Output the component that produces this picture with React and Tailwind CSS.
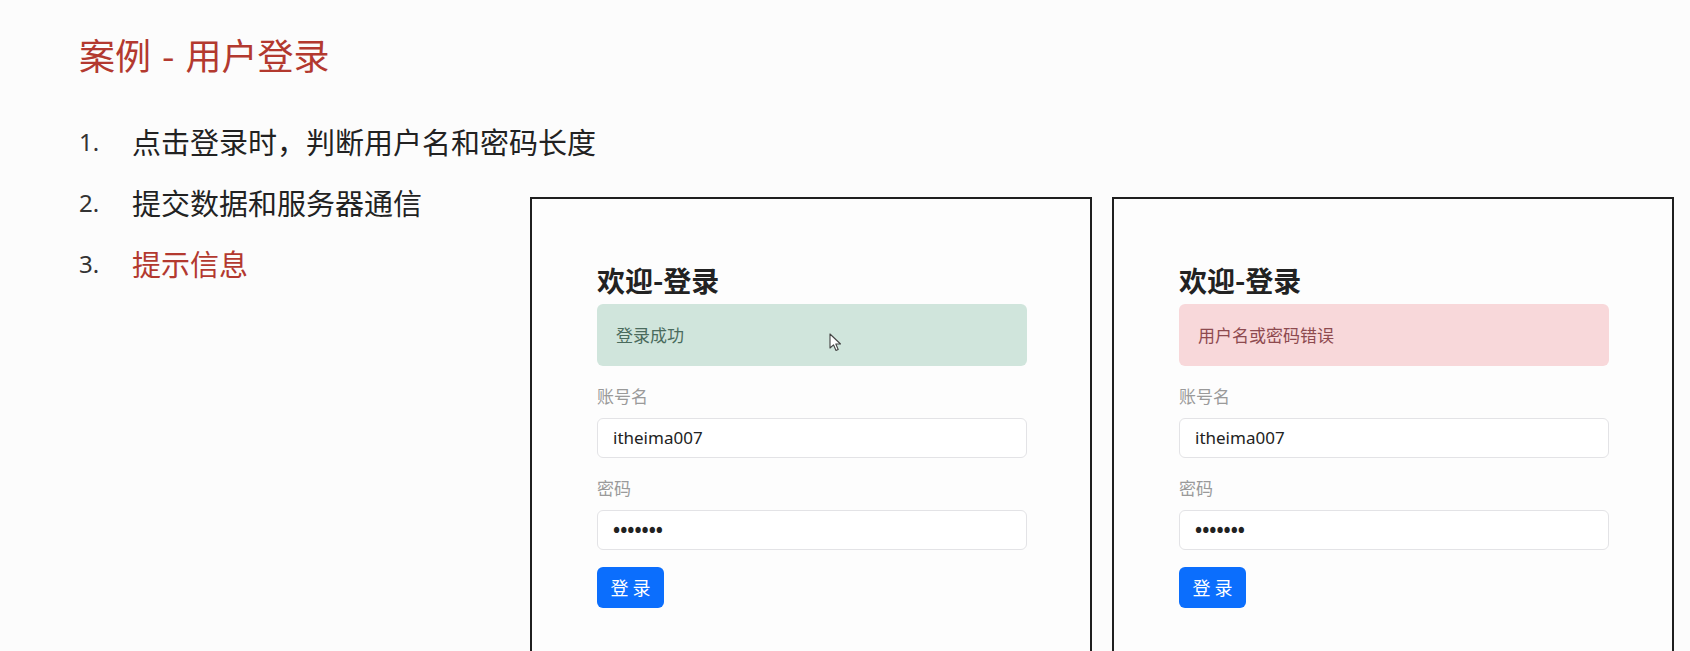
import React from "react";

const cjk = { fontFamily: '"Noto Sans CJK SC", "Noto Sans", sans-serif' };
const latin = { fontFamily: '"Noto Sans", "Noto Sans CJK SC", sans-serif' };

function Cursor() {
  return (
    <svg
      className="absolute left-[232px] top-[29px]"
      width="13"
      height="19"
      viewBox="0 0 13 19"
    >
      <path
        d="M1 1 L1 15 L4.5 11.8 L7 17.5 L9.2 16.5 L6.8 11 L11.5 11 Z"
        fill="#fff"
        stroke="#444"
        strokeWidth="1.1"
        strokeLinejoin="round"
      />
    </svg>
  );
}

function LoginCard({ variant }) {
  const ok = variant === "success";
  return (
    <div className="w-[562px] h-[480px] shrink-0 border-2 border-[#1f1f1f] bg-[#fdfdfd] pl-[65px] pt-[64px]">
      <div className="w-[430px]" style={cjk}>
        <h2 className="text-[28px] leading-[34px] font-bold text-[#222] mb-[7px]">
          欢迎-登录
        </h2>
        <div
          className={
            ok
              ? "relative h-[62px] rounded-[6px] bg-[#d0e5dc] text-[#4a6b5d] flex items-center px-[19px] text-[17px]"
              : "relative h-[62px] rounded-[6px] bg-[#f8d8da] text-[#8e4a4f] flex items-center px-[19px] text-[17px]"
          }
        >
          {ok ? "登录成功" : "用户名或密码错误"}
          {ok && <Cursor />}
        </div>
        <div className="mt-[18px] text-[17px] leading-[24px] text-[#9a9a9a]">账号名</div>
        <div
          className="mt-[10px] h-[40px] rounded-[6px] border border-[#e3e3e6] bg-white flex items-center px-[15px] text-[17px] text-[#222]"
          style={latin}
        >
          itheima007
        </div>
        <div className="mt-[18px] text-[17px] leading-[24px] text-[#9a9a9a]">密码</div>
        <div
          className="mt-[10px] h-[40px] rounded-[6px] border border-[#e3e3e6] bg-white flex items-center px-[15px] text-[19px] font-bold text-[#222]"
          style={latin}
        >
          •••••••
        </div>
        <button
          type="button"
          className="mt-[17px] w-[67px] h-[41px] rounded-[6px] bg-[#0b6efd] text-white text-[18px] flex items-center justify-center"
        >
          登 录
        </button>
      </div>
    </div>
  );
}

export default function App() {
  const items = [
    { n: "1.", t: "点击登录时，判断用户名和密码长度", red: false },
    { n: "2.", t: "提交数据和服务器通信", red: false },
    { n: "3.", t: "提示信息", red: true },
  ];

  return (
    <div className="w-[1690px] h-[651px] overflow-hidden bg-[#fcfcfc] pl-[79px] pt-[32px]" style={cjk}>
      <h1 className="text-[36px] leading-[44px] text-[#b3392f] flex items-center">
        <span>案例</span>
        <span className="mx-[11px]">-</span>
        <span>用户登录</span>
      </h1>

      <div className="flex mt-[35px]">
        {/* list */}
        <ol className="w-[451px] shrink-0">
          {items.map((it) => (
            <li key={it.n} className="h-[61px] flex items-center text-[29px] whitespace-nowrap">
              <span className="w-[53px] shrink-0 text-[24px] text-[#333]" style={latin}>
                {it.n}
              </span>
              <span className={it.red ? "text-[#b3392f]" : "text-[#222]"}>{it.t}</span>
            </li>
          ))}
        </ol>

        {/* cards */}
        <div className="flex gap-[20px] mt-[86px]">
          <LoginCard variant="success" />
          <LoginCard variant="danger" />
        </div>
      </div>
    </div>
  );
}
